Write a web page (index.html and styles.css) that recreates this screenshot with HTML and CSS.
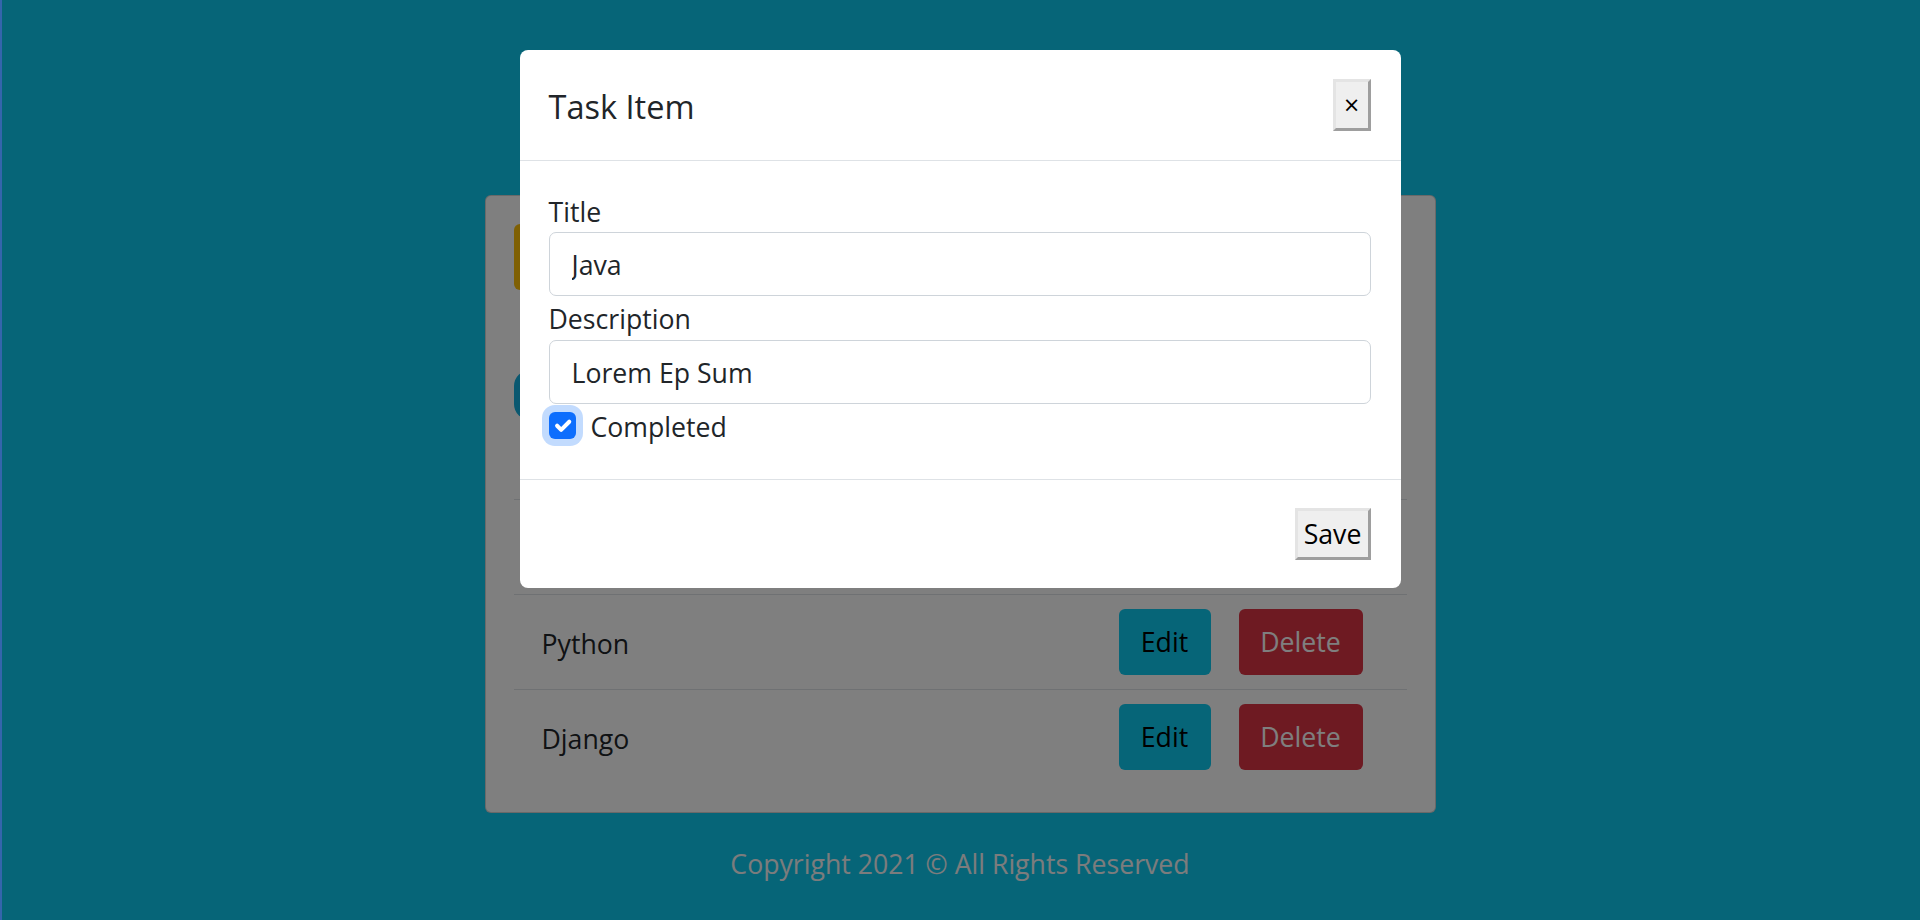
FILE: index.html
```html
<!DOCTYPE html>
<html lang="en">
<head>
<meta charset="utf-8">
<title>Todo App</title>
<link rel="stylesheet" href="styles.css">
</head>
<body>
<main class="page">
  <h1 class="app-title">Todo App</h1>
  <section class="card">
    <div class="card-top">
      <button class="btn btn-warning">Add Task</button>
    </div>
    <nav class="tabs">
      <span class="tab tab-active">Complete</span>
      <span class="tab">Incomplete</span>
    </nav>
    <ul class="task-list">
      <li class="task-row">
        <span class="task-title">Java</span>
        <span class="task-actions">
          <button class="btn btn-info btn-edit">Edit</button>
          <button class="btn btn-danger btn-delete">Delete</button>
        </span>
      </li>
      <li class="task-row">
        <span class="task-title">Python</span>
        <span class="task-actions">
          <button class="btn btn-info btn-edit">Edit</button>
          <button class="btn btn-danger btn-delete">Delete</button>
        </span>
      </li>
      <li class="task-row">
        <span class="task-title">Django</span>
        <span class="task-actions">
          <button class="btn btn-info btn-edit">Edit</button>
          <button class="btn btn-danger btn-delete">Delete</button>
        </span>
      </li>
    </ul>
  </section>
  <footer class="page-footer">Copyright 2021 © All Rights Reserved</footer>
</main>

<div class="backdrop"></div>

<div class="modal-layer">
  <div class="modal">
    <div class="modal-header">
      <h5 class="modal-title">Task Item</h5>
      <button class="native-btn close-btn">×</button>
    </div>
    <div class="modal-body">
      <label class="field-label">Title</label>
      <input class="field-input" type="text" value="Java">
      <label class="field-label field-label-2">Description</label>
      <input class="field-input field-input-2" type="text" value="Lorem Ep Sum">
      <div class="check-row">
        <span class="check-box">
          <svg viewBox="0 0 20 20" width="27" height="27"><path d="M6 10.2l3 3 6-6" fill="none" stroke="#fff" stroke-width="3" stroke-linecap="round" stroke-linejoin="round"/></svg>
        </span>
        <span class="check-label">Completed</span>
      </div>
    </div>
    <div class="modal-footer">
      <button class="native-btn save-btn">Save</button>
    </div>
  </div>
</div>
</body>
</html>
```

FILE: styles.css
```css
* {
  box-sizing: border-box;
}

html, body {
  margin: 0;
  padding: 0;
}

body {
  background: #0dcaf0;
  font-family: "Open Sans", "Noto Sans", sans-serif;
  font-size: 26.67px;
  line-height: 40px;
  color: #212529;
  min-height: 920px;
  overflow: hidden;
}

.page {
  padding-top: 35px;
}

.app-title {
  margin: 40px 0 40px;
  height: 80px;
  line-height: 80px;
  text-align: center;
  color: #fff;
  text-transform: uppercase;
  font-size: 60px;
  font-weight: 500;
}

.card {
  width: 951px;
  margin: 0 auto;
  background: #fff;
  border: 1px solid rgba(0, 0, 0, 0.175);
  border-radius: 6px;
  padding: 28px;
}

.card-top {
  display: flex;
  margin-bottom: 40px;
}

.btn {
  height: 66px;
  padding: 0 20px;
  border: 1px solid transparent;
  border-radius: 6px;
  font-family: inherit;
  font-size: 26.67px;
  line-height: 40px;
  cursor: pointer;
}

.btn-warning {
  background: #ffc107;
  color: #000;
}

.btn-info {
  background: #0dcaf0;
  color: #000;
}

.btn-danger {
  background: #dc3545;
  color: #fff;
}

.btn-edit {
  width: 92px;
}

.btn-delete {
  width: 124px;
}

.tabs {
  display: flex;
  gap: 10px;
  padding: 40px 0 79px;
  border-bottom: 1px solid #dee2e6;
}

.tab {
  height: 50px;
  padding: 0 26px;
  line-height: 50px;
  border-radius: 16px;
  color: #212529;
}

.tab-active {
  background: #14b0e0;
  color: #fff;
}

.task-list {
  list-style: none;
  margin: 0;
  padding: 0;
}

.task-row {
  display: flex;
  align-items: center;
  justify-content: space-between;
  padding: 14px 44px 14px 28px;
  border-bottom: 1px solid #dee2e6;
}

.task-row:last-child {
  border-bottom: 0;
}

.task-title {
  padding-top: 3px;
}

.task-actions {
  display: flex;
  gap: 28px;
}

.page-footer {
  margin-top: 31px;
  text-align: center;
  line-height: 40px;
  color: #f8f9fa;
}

.backdrop {
  position: fixed;
  inset: 0;
  background: rgba(0, 0, 0, 0.5);
  border-left: 2px solid #3465ac;
}

.modal-layer {
  position: fixed;
  inset: 0;
  display: flex;
  justify-content: center;
  align-items: flex-start;
  padding-top: 50px;
}

.modal {
  width: 881px;
  background: #fff;
  border-radius: 8px;
}

.modal-header {
  height: 111px;
  display: flex;
  align-items: center;
  justify-content: space-between;
  padding: 0 30px 0 29px;
  border-bottom: 1px solid #dee2e6;
}

.modal-title {
  margin: 0;
  padding-top: 4px;
  font-size: 32.5px;
  line-height: 50px;
  font-weight: 400;
  color: #212529;
}

.native-btn {
  height: 52px;
  display: inline-flex;
  align-items: center;
  justify-content: center;
  background: #efefef;
  border-style: solid;
  border-width: 3px;
  border-color: #e4e4e4 #9e9e9e #9e9e9e #e4e4e4;
  border-radius: 0;
  font-family: inherit;
  font-size: 26.67px;
  line-height: 40px;
  color: #000;
  padding: 0 8px;
}

.close-btn {
  width: 38px;
  padding: 0;
}

.save-btn {
  width: 76px;
  padding: 0;
}

.modal-body {
  padding: 30px 30px 34px 29px;
  display: flex;
  flex-direction: column;
}

.field-label {
  display: block;
  height: 40px;
  line-height: 40px;
  margin-bottom: 1px;
  padding-top: 1px;
}

.field-label-2 {
  margin-top: 2px;
  margin-bottom: 2px;
}

.field-input {
  display: block;
  width: 100%;
  height: 64px;
  padding: 0 22px;
  border: 1px solid #ced4da;
  border-radius: 7px;
  font-family: inherit;
  font-size: 26.67px;
  color: #212529;
  background: #fff;
  outline: none;
}

.field-input-2 {
  margin-bottom: 1px;
}

.check-row {
  display: flex;
  align-items: center;
  gap: 15px;
  height: 40px;
}

.check-label {
  padding-top: 3px;
}

.check-box {
  width: 27px;
  height: 27px;
  display: flex;
  border-radius: 6px;
  background: #0d6efd;
  box-shadow: 0 0 0 7px rgba(13, 110, 253, 0.25);
}

.check-box svg {
  display: block;
}

.modal-footer {
  display: flex;
  justify-content: flex-end;
  padding: 28px 30px 28px;
  border-top: 1px solid #dee2e6;
}
```
